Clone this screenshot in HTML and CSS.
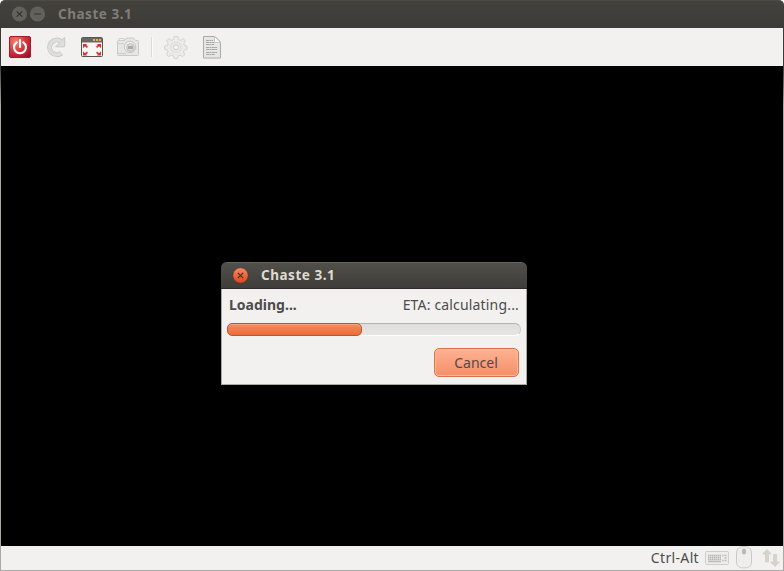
FILE: index.html
```html
<!DOCTYPE html>
<html lang="en">
<head>
<meta charset="utf-8">
<title>Chaste 3.1</title>
<link rel="stylesheet" href="styles.css">
</head>
<body>
<div class="window">
  <header class="titlebar">
    <svg class="winbtns" width="36" height="18" viewBox="0 0 36 18">
      <circle cx="9.500" cy="9" r="7.6" fill="#62615b"/><circle cx="27.500" cy="9" r="7.6" fill="#62615b"/>
      <path d="M6.800 6.300l5.400 5.400M12.200 6.300l-5.400 5.400M24 9h7" stroke="#33322e" stroke-width="1.2"/>
    </svg>
    <h1 class="title">Chaste 3.1</h1>
  </header>
  <nav class="toolbar">
    <svg class="tool" width="24" height="24" viewBox="0 0 24 24">
      <defs><radialGradient id="power" cx=".3" cy=".25" r=".95"><stop offset="0" stop-color="#f08570"/><stop offset=".5" stop-color="#d5363a"/><stop offset="1" stop-color="#980b31"/></radialGradient></defs>
      <rect x="1.500" y="1.500" width="21" height="21" rx="1.500" fill="url(#power)" stroke="#a71a2b"/>
      <path d="M8.700 7.300a6 6 0 1 0 6.600 0M12 5v7" fill="none" stroke="#fff" stroke-width="2.100" stroke-linecap="round"/>
    </svg>
    <svg class="tool" width="24" height="24" viewBox="0 0 24 24">
      <path d="M17 6.300A7.300 7.300 0 1 0 17.500 18" fill="none" stroke="#c8c8c6" stroke-width="5"/>
      <path d="M20.700 2.500v9.300h-9z" fill="#dededc" stroke="#c8c8c6" stroke-linejoin="round"/>
      <path d="M17 6.300A7.300 7.300 0 1 0 17.200 18.200" fill="none" stroke="#dededc" stroke-width="3.400"/>
    </svg>
    <svg class="tool" width="24" height="24" viewBox="0 0 24 24">
      <rect x="1.500" y="2.500" width="21" height="19" rx="1" fill="#f7f7f6" stroke="#555753"/>
      <path d="M2 3h20v4.500H2z" fill="#686965"/>
      <path d="M13 4h2v2h-2zM16 4h2v2h-2zM19 4h2v2h-2z" fill="#e9b04c"/>
      <path d="M3 9h4l-.8 1L8 11.800 6.800 13 5 11.200l-2 2zM21 9h-4l.8 1-1.800 1.800 1.200 1.200 1.800-1.800 2 2zM3 20.500h4l-.8-1L8 17.700l-1.200-1.200L5 18.300l-2-2zM21 20.500h-4l.8-1-1.800-1.800 1.200-1.200 1.800 1.800 2-2z" fill="#cf3438"/>
    </svg>
    <svg class="tool" width="24" height="24" viewBox="0 0 24 24">
      <path d="M1.500 6.500q0-1 1-1h6l2-2.500h7l2 2.500h2q1 0 1 1v13q0 1-1 1h-19q-1 0-1-1z" fill="#e6e6e4" stroke="#c8c8c6"/>
      <path d="M2 8.500h6M3 3.500h5v2H3zM2 18.500h8" fill="none" stroke="#cececc"/>
      <circle cx="14" cy="12" r="5.700" fill="#f0f0ee" stroke="#c6c6c4"/>
      <circle cx="14.500" cy="12.500" r="3.900" fill="#dadad8" stroke="#bebebc"/>
      <path d="M12 11h5v3h-5z" fill="#aaaaa8"/>
    </svg>
    <span class="separator"></span>
    <svg class="tool" width="24" height="24" viewBox="0 0 24 24">
      <path d="M10 1.500h4l.7 3 2 .8L19.400 3.700l2 2.500-1.600 2.600.6 1.700 2.600.6v3.300l-2.800.7-.8 1.900 1.500 2.500-2.300 2.100-2.600-1.400-2 .8-.6 2.500h-3.300l-.7-2.600-2-.8-2.600 1.500-2.300-2.200 1.500-2.500-.8-2-2.600-.5v-3.300l2.800-.7.7-1.800L2.600 6.200l2.100-2.500 2.700 1.600 2-.8z" fill="#ebebe9" stroke="#d4d4d2"/>
      <circle cx="12" cy="12.300" r="5" fill="#ededeb" stroke="#dfdfdd" stroke-width="1.500"/><circle cx="12" cy="12.300" r="2.500" fill="#f4f3f2" stroke="#ccccca"/>
    </svg>
    <svg class="tool" width="24" height="24" viewBox="0 0 24 24">
      <path d="M3.500 1.500h11.500l5.500 5.500v16h-17z" fill="#e6e6e4" stroke="#aaaaa8"/>
      <path d="M14.500 1.500v6h6z" fill="#f9f9f8" stroke="#c8c8c6"/>
      <path d="M6 5.500h7M6 7.500h8M6 9.500h8M6 12.500h11M6 14.500h11M6 17.500h11M6 19.500h9" stroke="#a6a6a4" stroke-dasharray="3 .4 2 .4"/>
    </svg>
  </nav>
  <main class="screen">
    <section class="dialog">
      <header class="dialog-title">
        <svg class="close" width="18" height="18" viewBox="0 0 18 18">
          <defs><linearGradient id="close" x2="0" y2="1"><stop stop-color="#f58a64"/><stop offset="1" stop-color="#df471a"/></linearGradient></defs>
          <circle cx="9.500" cy="9.500" r="7.700" fill="url(#close)" stroke="#3a302a" stroke-width=".5"/>
          <path d="M6.800 6.800l5.400 5.400M12.200 6.800l-5.400 5.400" stroke="#4a2a1d" stroke-width="1.200"/>
        </svg>
        <h2 class="title">Chaste 3.1</h2>
      </header>
      <div class="dialog-body">
        <div class="labels"><strong class="loading">Loading...</strong><span class="eta">ETA: calculating...</span></div>
        <div class="track"><div class="fill"></div></div>
        <button class="cancel"><span>Cancel</span></button>
      </div>
    </section>
  </main>
  <footer class="status">
    <span class="hostkey">Ctrl-Alt</span>
    <svg width="24" height="14" viewBox="0 0 24 14">
      <rect x=".5" y=".5" width="23" height="13" rx="1" fill="#eeedeb" stroke="#cfcecc"/>
      <path d="M3 4.500h13M3 6.500h13M3 8.500h13" stroke="#b4b4b2" stroke-width="1.500" stroke-dasharray="1.500 .5"/>
      <path d="M3 10.500h13M17 4.500h1.500M17 9.500h1.500M19.500 4.500h2M19.500 7h2M19.500 9.500h2" stroke="#bcbcba" stroke-width="1.500"/>
    </svg>
    <svg class="mouse" width="16" height="23" viewBox="0 0 16 23">
      <path d="M.5 7q0-6.500 7.500-6.500T15.500 7v9q0 6-7.500 6t-7.500-6z" fill="#efeeed" stroke="#cbcac8"/>
      <rect x="6" y="2.500" width="4" height="6" rx="2" fill="#b8b8b6"/>
    </svg>
    <svg class="arrows" width="18" height="18" viewBox="0 0 18 18">
      <path d="M5 .5l4.300 4.500H6.500v8h-3V5H.7zM13 17.500l-4.300-4.500h2.800V5.500h3V13h2.800z" fill="#d8d3ca" stroke="#cdc8bf" stroke-width=".6"/>
    </svg>
  </footer>
</div>
</body>
</html>
```
FILE: styles.css
```css
* { box-sizing: border-box; }
body { margin: 0; background: #fff; }
h1, h2 { margin: 0; }
svg { display: block; flex: none; }
.window {
  width: 784px; height: 571px;
  display: flex; flex-direction: column;
  font: 14px "Noto Sans", sans-serif; color: #4c4c4c;
}
.titlebar {
  height: 28px; flex: none; display: flex; align-items: center; padding: 0 0 1px 10px;
  background: linear-gradient(#43423d, #3c3b37);
  border-top: 1px solid #4c4b46; border-radius: 5px 5px 0 0;
}
.title { font-size: 13.5px; line-height: 20px; font-weight: 700; letter-spacing: .53px; white-space: nowrap; }
.titlebar .title { margin-left: 12px; color: #807d78; }
.toolbar {
  height: 38px; flex: none; display: flex; align-items: center; gap: 12px; padding: 0 8px 1px 7px;
  background: #f2f1f0; border-left: 1px solid #3c3b37; border-right: 1px solid #3c3b37;
}
.separator { width: 2px; height: 20px; margin: 0 -1px 0 -1px; background: #dcdad8; border-right: 1px solid #fafafa; }
.screen {
  height: 480px; flex: none; display: flex; justify-content: center; align-items: flex-start;
  padding: 196px 37px 0 1px;
  background:
    linear-gradient(#3c3b37, #aaa9a3 40px) left / 1px 100% no-repeat,
    linear-gradient(#3c3b37, #aaa9a3 40px) right / 1px 100% no-repeat,
    #000;
}
.dialog { width: 306px; height: 123px; display: flex; flex-direction: column; }
.dialog-title {
  height: 27px; flex: none; display: flex; align-items: center; padding: 0 0 2px 10px;
  background: linear-gradient(#504f49, #3e3d39);
  border-top: 1px solid #66655f; border-bottom: 1px solid #302a2e; border-radius: 6px 6px 0 0;
}
.dialog-title .title { margin-left: 12px; color: #dfdbd2; }
.dialog-body {
  flex: 1; display: flex; flex-direction: column; padding: 6px 5px 0;
  background: #f2f1f0; border: 1px solid #aaa9a3; border-top: 0;
}
.labels { display: flex; justify-content: space-between; padding: 0 2px; line-height: 20px; white-space: nowrap; }
.eta { letter-spacing: .17px; }
.track {
  height: 13px; margin-top: 8px; border-radius: 6px; background: linear-gradient(#dfdedd, #e6e5e4);
  border: 1px solid #cfcdcb; border-top-color: #b5b3b1; border-bottom-color: #fff;
}
.fill {
  width: 135px; height: 13px; margin: -1px 0 0 -1px; border: 1px solid #bd542d; border-radius: 5px;
  background: linear-gradient(#f78c60, #ea6c38); box-shadow: inset 0 1px #fca47f;
}
.cancel {
  width: 85px; height: 29px; margin: 12px 2px 0 0; padding: 0 1px 0 0; align-self: flex-end;
  border: 1px solid #d8744c; border-radius: 5px; background: linear-gradient(#ffb293, #f58e66);
  box-shadow: inset 0 0 0 1px #ffb799; font: inherit; color: #4c4c4c;
}
.status {
  height: 25px; flex: none; display: flex; align-items: center; padding: 0 3px 1px 0; justify-content: flex-end;
  background: #f2f1f0; border: 1px solid #aaa9a3; border-top: 0;
}
.hostkey { margin-right: 6px; letter-spacing: .35px; }
.mouse { margin-left: 7px; }
.arrows { margin-left: 10px; }
```
